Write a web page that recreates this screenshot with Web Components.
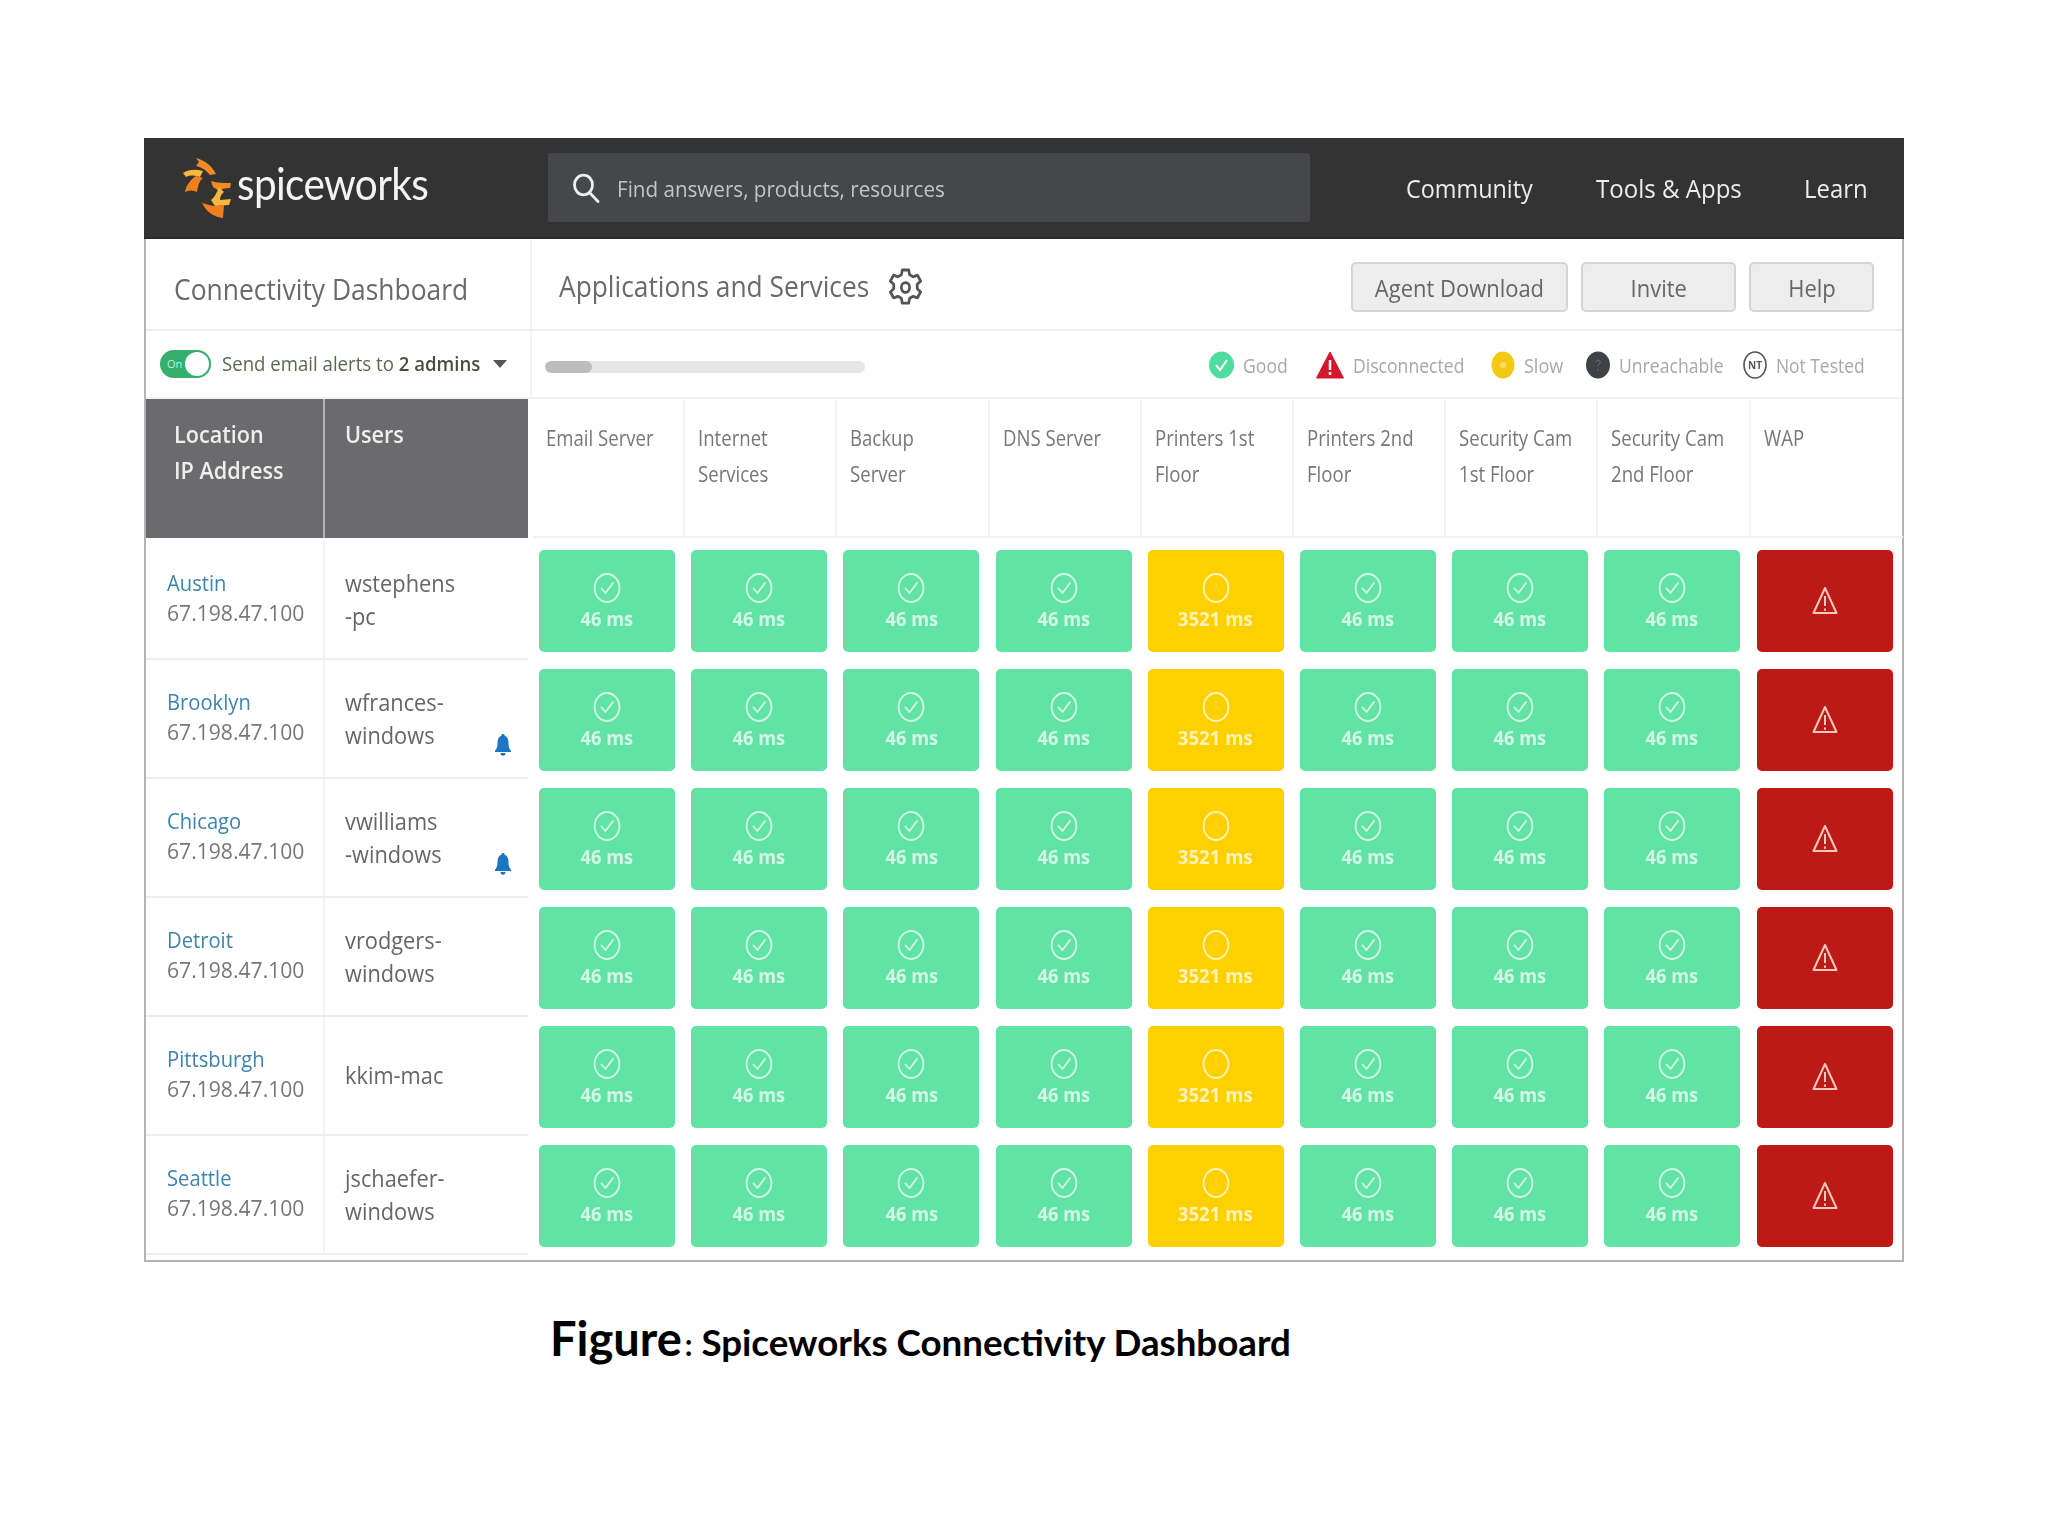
<!DOCTYPE html>
<html><head><meta charset="utf-8"><style>
html,body{margin:0;background:#fff}
body{font-family:"Open Sans","Liberation Sans",sans-serif}
</style></head><body>
<sw-page></sw-page>
<script>
const def=(name,css,html,init)=>{customElements.define(name,class extends HTMLElement{
  connectedCallback(){ if(this.shadowRoot) return; const r=this.attachShadow({mode:'open'});
    r.innerHTML='<style>'+css+'</style>'+(typeof html==='function'?html(this):html); if(init) init(this,r);} });};

/* narrowed text: the reference's type is horizontally condensed */
const T=(text,s,w,center)=>`<sw-t style="--s:${s};${w?'width:'+w+'px;':''}${center?'transform-origin:50% 50%;':''}">${text}</sw-t>`;
def('sw-t',':host{display:inline-block;white-space:nowrap;transform:scaleX(var(--s,.9));transform-origin:0 50%}','<slot></slot>');

const ICON={
 check:'<svg width="28" height="30" viewBox="0 0 28 30" fill="none" stroke="currentColor" stroke-width="1.8"><ellipse cx="14" cy="15" rx="12.4" ry="14"/><path d="M8.5 15.5l4 4.5 7.5-10" stroke-linecap="round" stroke-linejoin="round"/></svg>',
 clock:'<svg width="28" height="30" viewBox="0 0 28 30" fill="none" stroke="currentColor" stroke-width="1.8"><ellipse cx="14" cy="15" rx="12.4" ry="14"/><path d="M14 9v6.5l4 2.5" stroke-width="1" opacity=".35"/></svg>',
 warn:'<svg width="26" height="30" viewBox="0 0 26 30" fill="none" stroke="currentColor" stroke-width="2" stroke-linejoin="round"><path d="M13 2L24.500 27H1.500Z"/><path d="M13 10v10M13 22.500v2.200"/></svg>',
 bell:'<svg width="16" height="22" viewBox="0 0 16 22" fill="#1b76c4"><path d="M8 0a1.600 1.600 0 0 1 1.600 1.800C12.500 2.700 13.500 5.500 13.500 9c0 3.500.7 5.700 2.500 7.700V18H0v-1.300C1.800 14.700 2.500 12.500 2.500 9c0-3.500 1-6.300 3.900-7.200A1.600 1.600 0 0 1 8 0z"/><path d="M5.500 19h5a2.500 2.700 0 0 1-5 0z"/></svg>'
};

def('sw-logo',
 ':host{display:flex;align-items:center;margin-left:39px;width:365px}svg{display:block;flex:none}span{font:400 45px/1 Lato,"Open Sans",sans-serif;color:#f4f4f4;margin-left:4px;letter-spacing:-.7px;position:relative;top:-4px;transform:scaleX(.9);transform-origin:0 50%}',
 `<svg width="50" height="64" viewBox="0 0 50 64">
  <path fill="#f08a22" d="M13 2C20 4 28 8 33 18L27 19C22 13 18 11 13 10L16 6Z"/>
  <path fill="#f9b63e" d="M0 17C6 13 13 13 20 15L17 21C11 19 6 19 3 21Z"/>
  <path fill="#ee7f1c" d="M2 36C3 30 7 24 13 20L20 22C16 25 15 30 14 36C10 34 6 34 2 36Z"/>
  <path fill="#f08a22" d="M28 25C34 27 41 27 48 27L47 32C42 32 38 33 36 35L30 31Z"/>
  <path fill="#f9b63e" d="M36 31L41 36C38 38 37 41 37 44L48 43L46 49L32 50L28 44C32 41 34 36 36 31Z"/>
  <path fill="#ee7f1c" d="M19 47C24 48 28 50 34 50L41 49L40 62C32 61 24 57 19 47Z"/>
 </svg><span>spiceworks</span>`);

def('sw-search',
 ':host{display:flex;align-items:center;width:762px;height:69px;background:#45474b;border-radius:2px;box-sizing:border-box;padding-left:24px;color:#c4c4c4;font-size:22.500px}svg{flex:none;margin-right:17px}::slotted(*){position:relative;top:1px}',
 '<svg width="28" height="30" viewBox="0 0 28 30" fill="none" stroke="#eee" stroke-width="2.800" stroke-linecap="round"><ellipse cx="11.500" cy="12" rx="9" ry="9.800"/><path d="M18 20l8 8.500"/></svg><slot></slot>');

def('sw-nav',
 ':host{display:flex;align-items:center;height:101px;background:#333334;box-sizing:border-box;color:#ececec;font-size:26px;border-bottom:2px solid #2a2a2a}nav{display:flex;margin-left:auto;margin-right:38px;gap:63px}',
 `<sw-logo></sw-logo><sw-search>${T('Find answers, products, resources',.916)}</sw-search><nav>${T('Community',.9,127)}${T('Tools &amp; Apps',.925,145)}${T('Learn',.92,62)}</nav>`);

def('sw-button',
 ':host{display:flex;align-items:center;justify-content:center;height:50px;box-sizing:border-box;background:#ededed;border:2px solid #d4d4d4;border-radius:5px;color:#666;font-size:24px}',
 '<slot></slot>');

def('sw-title',
 ':host{display:flex;align-items:center;height:92px;border-bottom:2px solid #efefef;box-sizing:border-box;color:#6a6a6a;font-size:29px}.l{width:386px;padding-left:28px;box-sizing:border-box;height:100%;display:flex;align-items:center;border-right:2px solid #f2f2f2;padding-top:9px}.r{flex:1;display:flex;align-items:center;padding-left:27px}.h{padding-top:3px}svg{margin-left:19px;margin-top:6px}.b{display:flex;gap:13px;margin-left:auto;margin-right:28px;margin-top:6px}',
 `<div class="l">${T('Connectivity Dashboard',.911)}</div><div class="r"><div class="h">${T('Applications and Services',.908,311)}</div>
  <svg width="33" height="39" viewBox="0 0 36 40" preserveAspectRatio="none" fill="none" stroke="#555" stroke-width="3" stroke-linejoin="round"><path d="M14.500 2h7l1 5 3.800 2 4.700-1.600 3.500 6-3.700 3.300v4.600l3.700 3.300-3.500 6-4.700-1.600-3.800 2-1 5h-7l-1-5-3.800-2-4.700 1.600-3.500-6 3.700-3.300v-4.600L1.500 13.400l3.500-6 4.700 1.600 3.800-2z"/><ellipse cx="18" cy="20" rx="4.500" ry="5"/></svg>
  <div class="b"><sw-button style="width:217px">${T('Agent Download',.915,0,1)}</sw-button><sw-button style="width:155px">${T('Invite',.915,0,1)}</sw-button><sw-button style="width:125px">${T('Help',.915,0,1)}</sw-button></div></div>`);

def('sw-toggle',
 ':host{display:block;width:51px;height:28px;background:#35b06c;border-radius:14px;position:relative;flex:none;color:#bff0d4;font-size:11px;line-height:28px;text-indent:7px}i{position:absolute;right:2px;top:2px;width:24px;height:24px;border-radius:50%;background:#fff}',
 'On<i></i>');

def('sw-legend-item',
 ':host{display:flex;align-items:center;color:#a8a8a8;font-size:20px}svg{display:block;margin-right:var(--g,9px)}',
 s=>({good:'<svg width="25" height="28" viewBox="0 0 25 28"><ellipse cx="12.500" cy="14" rx="12.500" ry="13.500" fill="#4fdc9f"/><path d="M7 14l4 5 7-10" fill="none" stroke="#fff" stroke-width="2"/></svg>',
   bad:'<svg width="28" height="28" viewBox="0 0 28 28"><path d="M14 1l13.500 26H.5z" fill="#d3182b" stroke="#d3182b" stroke-linejoin="round"/><path d="M14 9v10M14 21v3" stroke="#fff" stroke-width="2.500"/></svg>',
   slow:'<svg width="24" height="28" viewBox="0 0 24 28"><ellipse cx="12" cy="14" rx="11.500" ry="13.500" fill="#f3c913"/><circle cx="12" cy="14" r="3" fill="#f9dd6a"/></svg>',
   un:'<svg width="24" height="28" viewBox="0 0 24 28"><ellipse cx="12" cy="14" rx="12" ry="13.500" fill="#3f4247"/><path d="M10 11c1-3 5-2 4 1-.5 1.500-2 1.500-2 3.500M12 18v1.500" stroke="#777" fill="none"/></svg>',
   nt:'<svg width="24" height="28" viewBox="0 0 24 28"><ellipse cx="12" cy="14" rx="11" ry="13" fill="#fff" stroke="#555" stroke-width="1.600"/><text x="12" y="18" font-size="10" font-weight="700" text-anchor="middle" fill="#555" font-family="Open Sans">NT</text></svg>'
  }[s.getAttribute('kind')])+'<slot></slot>');

def('sw-filter',
 ':host{display:flex;height:68px;box-sizing:border-box;border-bottom:2px solid #f3f3f3;align-items:center}.l{width:386px;box-sizing:border-box;display:flex;align-items:center;padding-left:14px;color:#5c6a4c;font-size:20.500px;height:100%;border-right:2px solid #f4f4f4}.l .s{margin-left:11px;width:259px;margin-bottom:2px}b{font-weight:600;color:#4a4f3c}.c{width:0;height:0;border:7px solid transparent;border-top:8px solid #555;border-bottom:0;margin-left:12px}.bar{width:320px;height:12px;border-radius:6px;background:#e6e6e6;margin:6px 0 0 13px;overflow:hidden;flex:none}.bar i{display:block;width:47px;height:100%;background:#bdbdbd;border-radius:6px}.lg{display:flex;margin-left:auto;margin-right:38px;margin-top:2px}',
 `<div class="l"><sw-toggle></sw-toggle><div class="s">${T('Send email alerts to <b>2 admins</b>',.908,259)}</div><i class="c"></i></div><div class="bar"><i></i></div>
  <div class="lg"><sw-legend-item kind="good" style="margin-right:28px">${T('Good',.88,45)}</sw-legend-item><sw-legend-item kind="bad" style="margin-right:26px">${T('Disconnected',.88,112)}</sw-legend-item><sw-legend-item kind="slow" style="margin-right:22px">${T('Slow',.9,40)}</sw-legend-item><sw-legend-item kind="un" style="margin-right:20px">${T('Unreachable',.88,104)}</sw-legend-item><sw-legend-item kind="nt">${T('Not Tested',.87,88)}</sw-legend-item></div>`);

const COLS=['Email Server','Internet<br>Services','Backup<br>Server','DNS Server','Printers 1st<br>Floor','Printers 2nd<br>Floor','Security Cam<br>1st Floor','Security Cam<br>2nd Floor','WAP'];
def('sw-head',
 ':host{display:flex;height:139px}.g{display:flex;width:382px;margin-right:5px;background:#6b6a6c;color:#eee;font-size:23px;font-weight:600;line-height:36px;flex:none}.g div{padding:17px 0 0 28px;box-sizing:border-box}.g div:first-child{border-right:2px solid #b5b5b7;box-sizing:content-box;padding-left:28px;width:149px}.g div:last-child{padding-left:20px}.c{flex:none;width:152.200px;box-sizing:border-box;padding:21px 0 0 13px;color:#777;font-size:21px;line-height:36px;border-right:2px solid #f4f4f4;border-bottom:2px solid #f1f1f1}.c:last-child{border-right:0}',
 ()=>`<div class="g"><div>${T('Location<br>IP Address',.94)}</div><div>${T('Users',.94)}</div></div>`+COLS.map(c=>`<div class="c">${T(c,.885)}</div>`).join(''));

def('sw-tile',
 ':host{display:flex;flex-direction:column;align-items:center;width:136px;height:102px;border-radius:5px;box-sizing:border-box;padding-top:23px;color:rgba(255,255,255,.72);font-size:20px;font-weight:700;line-height:24px}:host([kind=ok]){background:#62e3a6}:host([kind=slow]){background:#fdd000}:host([kind=down]){background:#bd1a15;color:#f9c9bf;justify-content:center;padding:0}svg{display:block;margin-bottom:4px}:host([kind=down]) svg{margin:0}',
 s=>{const k=s.getAttribute('kind');return k==='ok'?ICON.check+T('46 ms',.91,0,1):k==='slow'?ICON.clock+T('3521 ms',.93,0,1):ICON.warn;});

def('sw-row',
 ':host{display:flex;height:119px}.l{display:flex;flex:none;width:382px;margin-right:5px;border-bottom:2px solid #eee;box-sizing:border-box;position:relative}.a{width:179px;padding:0 0 6px 21px;box-sizing:border-box;border-right:2px solid #f3f3f3;font-size:22px;line-height:30px;color:#777;display:flex;flex-direction:column;justify-content:center}.a b{display:block;font-weight:400;color:#3d85ad}.u{padding:0 0 2px 20px;font-size:24.500px;line-height:33px;color:#666;display:flex;align-items:center}.bell{position:absolute;left:349px;top:74px}svg{display:block}.t{display:flex;padding-top:9px}sw-tile{margin:0 10.200px 0 6px}',
 s=>`<div class="l"><div class="a"><b>${T(s.getAttribute('city'),.918)}</b><span>${T('67.198.47.100',.96)}</span></div><div class="u"><div>${T(s.getAttribute('user').replace('|','<br>'),.89)}</div></div>${s.hasAttribute('bell')?'<div class="bell">'+ICON.bell+'</div>':''}</div><div class="t">${['ok','ok','ok','ok','slow','ok','ok','ok','down'].map(k=>`<sw-tile kind="${k}"></sw-tile>`).join('')}</div>`);

def('sw-dashboard',
 ':host{display:block;width:1760px;height:1124px;box-sizing:border-box;border:solid #b4b4b4;border-width:0 2px 2px}sw-nav{margin:0 -2px}.rows{padding-top:3px}',
 `<sw-nav></sw-nav><sw-title></sw-title><sw-filter></sw-filter><sw-head></sw-head><div class="rows">
 <sw-row city="Austin" user="wstephens|-pc"></sw-row>
 <sw-row city="Brooklyn" user="wfrances-|windows" bell></sw-row>
 <sw-row city="Chicago" user="vwilliams|-windows" bell></sw-row>
 <sw-row city="Detroit" user="vrodgers-|windows"></sw-row>
 <sw-row city="Pittsburgh" user="kkim-mac"></sw-row>
 <sw-row city="Seattle" user="jschaefer-|windows"></sw-row></div>`);

def('sw-caption',
 ':host{display:block;margin:50px 0 0 406px;font-family:Lato,"Open Sans",sans-serif;font-weight:700;color:#000;font-size:36.700px;line-height:52px;white-space:nowrap}b{font-size:47px;font-weight:700}i{font-style:normal;font-size:30px;margin:0 0 0 3px}',
 '<b>Figure</b><i>:</i> Spiceworks Connectivity Dashboard');

def('sw-page',':host{display:block;padding:138px 0 0 144px;width:2048px;height:1536px;box-sizing:border-box}.soft{filter:blur(.5px)}',
 '<div class="soft"><sw-dashboard></sw-dashboard></div><sw-caption></sw-caption>');
</script></body></html>
